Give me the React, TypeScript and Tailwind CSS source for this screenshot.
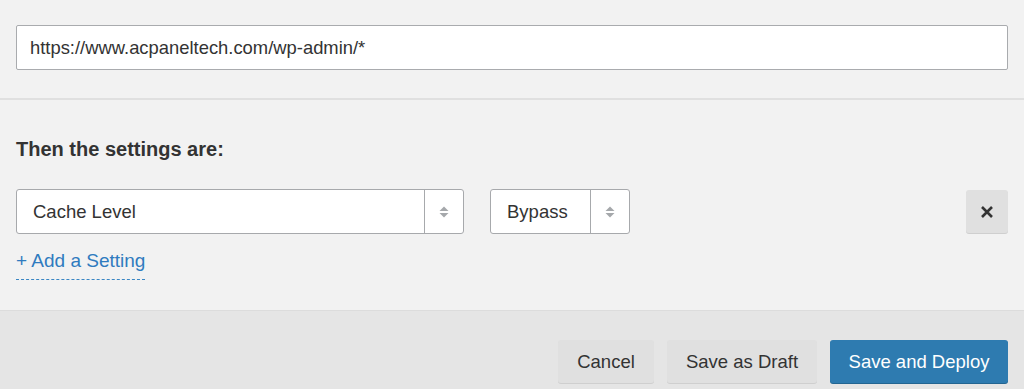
import React from 'react';

const Arrows = () => (
  <svg width="10" height="14" viewBox="0 0 10 14" className="text-[#a5a8ab]">
    <path d="M5 1.5 L9.5 6 H0.5 Z" fill="currentColor" />
    <path d="M5 12.5 L9.5 8 H0.5 Z" fill="currentColor" />
  </svg>
);

const Select = ({ label, width }: { label: string; width: string }) => (
  <div
    className={`flex h-[45px] ${width} items-stretch rounded-[3px] border border-[#a7a9ac] bg-white`}
  >
    <div className="flex flex-1 items-center pl-4 text-[18.5px] text-[#333]">{label}</div>
    <div className="flex w-[39px] items-center justify-center border-l border-[#a7a9ac]">
      <Arrows />
    </div>
  </div>
);

export default function App() {
  return (
    <div
      className="h-[389px] w-[1024px] overflow-hidden bg-[#f2f2f2]"
      style={{ fontFamily: '"Liberation Sans", Arial, sans-serif' }}
    >
      {/* url section */}
      <div className="px-4 pt-[25px] pb-[28px]">
        <div className="flex h-[45px] w-[992px] items-center rounded-[2px] border border-[#a9abae] bg-white px-[13px] text-[18.4px] text-[#333]">
          https://www.acpaneltech.com/wp-admin/*
        </div>
      </div>
      <div className="h-[2px] bg-[#e0e0e0]" />

      {/* settings */}
      <div className="h-[210px] px-4 pt-[34px]">
        <h2 className="text-[20px] font-bold text-[#333]">Then the settings are:</h2>
        <div className="mt-[25px] flex items-center">
          <Select label="Cache Level" width="w-[448px]" />
          <div className="ml-[26px]">
            <Select label="Bypass" width="w-[140px]" />
          </div>
          <button className="ml-auto flex h-[43px] w-[42px] items-center justify-center rounded-[3px] bg-[#e0e0e0] shadow-[0_1px_0_#cfcfcf]">
            <svg width="14" height="14" viewBox="0 0 14 14">
              <path d="M2 2 L12 12 M12 2 L2 12" stroke="#333" strokeWidth="2.6" />
            </svg>
          </button>
        </div>
        <div className="mt-[13px]">
          <a className="inline-block border-b border-dashed border-b-[#3a86c4] pb-[3px] text-[19px] text-[#2f7bbf]">
            + Add a Setting
          </a>
        </div>
      </div>

      {/* footer */}
      <div className="flex h-[79px] items-start justify-end gap-[13px] border-t border-[#dcdcdc] bg-[#e5e5e5] px-4 pt-[29px]">
        <button className="h-[43px] w-[96px] rounded-[3px] bg-[#e0e0e0] text-[18.5px] text-[#333] shadow-[0_1px_0_#cfcfcf]">
          Cancel
        </button>
        <button className="h-[43px] w-[150px] rounded-[3px] bg-[#e0e0e0] text-[18.5px] text-[#333] shadow-[0_1px_0_#cfcfcf]">
          Save as Draft
        </button>
        <button className="h-[43px] w-[178px] rounded-[3px] bg-[#2e7bb0] text-[18.5px] text-white shadow-[0_1px_0_#236591]">
          Save and Deploy
        </button>
      </div>
    </div>
  );
}
